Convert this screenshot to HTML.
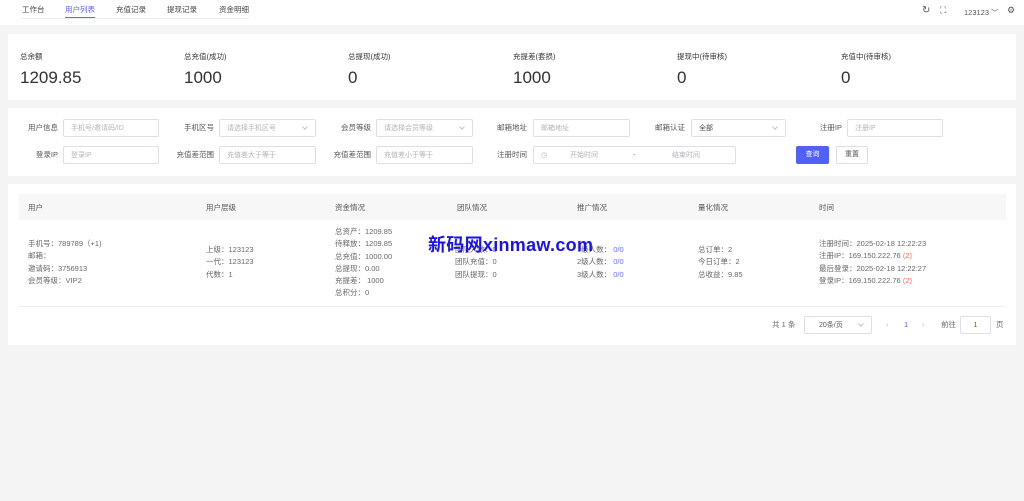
<!DOCTYPE html>
<html><head><meta charset="utf-8"><style>
*{margin:0;padding:0;box-sizing:border-box}
body{width:1024px;height:501px;background:#f4f4f5;font-family:"Liberation Sans","Noto Sans CJK SC",sans-serif;color:#606266;position:relative;overflow:hidden;font-size:8px}
.a{position:absolute;white-space:nowrap}
.hdr{position:absolute;left:0;top:0;width:1024px;height:25px;background:#fff}
.card{position:absolute;left:8px;width:1008px;background:#fff}
.lbl{font-size:7.5px;color:#333}
.num{font-size:17px;color:#303133}
.in{position:absolute;height:18px;border:1px solid #dcdfe6;border-radius:2px;background:#fff;color:#b0b3b8;font-size:7px;padding-left:7px;display:flex;align-items:center}
.fl{position:absolute;font-size:7.5px;color:#555;text-align:right;line-height:18px}
.chev{position:absolute;right:8px;top:5px;width:4px;height:4px;border-right:1px solid #c0c4cc;border-bottom:1px solid #c0c4cc;transform:rotate(45deg)}
.th{font-size:7.5px;color:#555;top:202px}
.td{font-size:7.5px;color:#666;line-height:12.3px}
.blue{color:#6a74f5}.red{color:#f56c6c}
</style></head><body>
<div class="hdr"></div>
<div class="a" style="left:22px;top:4px;font-size:7.5px;color:#444">工作台</div>
<div class="a" style="left:65px;top:4px;font-size:7.5px;color:#5c67f2">用户列表</div>
<div class="a" style="left:65px;top:17px;width:30px;height:1.5px;background:#5c67f2"></div>
<div class="a" style="left:116px;top:4px;font-size:7.5px;color:#444">充值记录</div>
<div class="a" style="left:167px;top:4px;font-size:7.5px;color:#444">提现记录</div>
<div class="a" style="left:219px;top:4px;font-size:7.5px;color:#444">资金明细</div>
<div class="a" style="left:21px;top:18px;width:228px;height:1px;background:#eee"></div>
<div class="a" style="left:922px;top:5px;font-size:10px;color:#555">↻</div>
<div class="a" style="left:940px;top:5px;font-size:9px;color:#555">⛶</div>
<div class="a" style="left:964px;top:7px;font-size:7.5px;color:#555">123123 ﹀</div>
<div class="a" style="left:1007px;top:5px;font-size:9px;color:#555">⚙</div>

<div class="card" style="top:34px;height:66px"></div>
<div class="a lbl" style="left:20px;top:51px">总余额</div><div class="a num" style="left:20px;top:68px">1209.85</div>
<div class="a lbl" style="left:184px;top:51px">总充值(成功)</div><div class="a num" style="left:184px;top:68px">1000</div>
<div class="a lbl" style="left:348px;top:51px">总提现(成功)</div><div class="a num" style="left:348px;top:68px">0</div>
<div class="a lbl" style="left:513px;top:51px">充提差(套损)</div><div class="a num" style="left:513px;top:68px">1000</div>
<div class="a lbl" style="left:677px;top:51px">提现中(待审核)</div><div class="a num" style="left:677px;top:68px">0</div>
<div class="a lbl" style="left:841px;top:51px">充值中(待审核)</div><div class="a num" style="left:841px;top:68px">0</div>

<div class="card" style="top:108px;height:68px"></div>
<div class="fl" style="left:0;width:58px;top:119px">用户信息</div><div class="in" style="left:63px;top:119px;width:96px">手机号/邀请码/ID</div>
<div class="fl" style="left:150px;width:64px;top:119px">手机区号</div><div class="in" style="left:219px;top:119px;width:97px">请选择手机区号<span class="chev"></span></div>
<div class="fl" style="left:310px;width:61px;top:119px">会员等级</div><div class="in" style="left:376px;top:119px;width:97px">请选择会员等级<span class="chev"></span></div>
<div class="fl" style="left:470px;width:57px;top:119px">邮箱地址</div><div class="in" style="left:533px;top:119px;width:97px">邮箱地址</div>
<div class="fl" style="left:630px;width:55px;top:119px">邮箱认证</div><div class="in" style="left:691px;top:119px;width:95px;color:#444">全部<span class="chev"></span></div>
<div class="fl" style="left:800px;width:42px;top:119px">注册IP</div><div class="in" style="left:847px;top:119px;width:96px">注册IP</div>
<div class="fl" style="left:0;width:58px;top:146px">登录IP</div><div class="in" style="left:63px;top:146px;width:96px">登录IP</div>
<div class="fl" style="left:150px;width:64px;top:146px">充值差范围</div><div class="in" style="left:219px;top:146px;width:97px">充值差大于等于</div>
<div class="fl" style="left:310px;width:61px;top:146px">充值差范围</div><div class="in" style="left:376px;top:146px;width:97px">充值差小于等于</div>
<div class="fl" style="left:470px;width:57px;top:146px">注册时间</div>
<div class="in" style="left:533px;top:146px;width:203px">◷<span style="position:absolute;left:36px">开始时间</span><span style="position:absolute;left:99px;color:#666">-</span><span style="position:absolute;left:138px">结束时间</span></div>
<div class="a" style="left:796px;top:146px;width:33px;height:18px;background:#5160f5;border-radius:2px;color:#fff;font-size:7px;text-align:center;line-height:18px">查询</div>
<div class="a" style="left:836px;top:146px;width:32px;height:18px;border:1px solid #dcdfe6;border-radius:2px;color:#555;font-size:7px;text-align:center;line-height:16px;background:#fff">重置</div>

<div class="card" style="top:184px;height:161px"></div>
<div class="a" style="left:19px;top:194px;width:987px;height:26px;background:#f7f7f8"></div>
<div class="a" style="left:19px;top:306px;width:987px;height:1px;background:#eceef2"></div>
<div class="a th" style="left:28px">用户</div>
<div class="a th" style="left:206px">用户层级</div>
<div class="a th" style="left:335px">资金情况</div>
<div class="a th" style="left:457px">团队情况</div>
<div class="a th" style="left:577px">推广情况</div>
<div class="a th" style="left:698px">量化情况</div>
<div class="a th" style="left:819px">时间</div>
<div class="a td" style="left:28px;top:238px">手机号：789789（+1)<br>邮箱：<br>邀请码：3756913<br>会员等级：VIP2</div>
<div class="a td" style="left:206px;top:244px">上级：123123<br>一代：123123<br>代数：1</div>
<div class="a td" style="left:335px;top:226px">总资产：1209.85<br>待释放：1209.85<br>总充值：1000.00<br>总提现：0.00<br>充提差： 1000<br>总积分：0</div>
<div class="a td" style="left:455px;top:244px">团队人数：0<br>团队充值：0<br>团队提现：0</div>
<div class="a td" style="left:577px;top:244px">1级人数： <span class="blue">0/0</span><br>2级人数： <span class="blue">0/0</span><br>3级人数： <span class="blue">0/0</span></div>
<div class="a td" style="left:698px;top:244px">总订单：2<br>今日订单：2<br>总收益：9.85</div>
<div class="a td" style="left:819px;top:238px">注册时间：2025-02-18 12:22:23<br>注册IP：169.150.222.76 <span class="red">(2)</span><br>最后登录：2025-02-18 12:22:27<br>登录IP：169.150.222.76 <span class="red">(2)</span></div>
<div class="a" style="left:428px;top:231px;font-size:18px;font-weight:bold;color:#1a12e8;letter-spacing:0.3px">新码网xinmaw.com</div>
<div class="a td" style="left:772px;top:319px">共 1 条</div>
<div class="in" style="left:804px;top:316px;width:68px;color:#555;padding-left:14px">20条/页<span class="chev"></span></div>
<div class="a td" style="left:886px;top:319px;color:#bbb">‹</div>
<div class="a td" style="left:904px;top:319px;color:#5160f5">1</div>
<div class="a td" style="left:922px;top:319px;color:#bbb">›</div>
<div class="a td" style="left:941px;top:319px">前往</div>
<div class="in" style="left:960px;top:316px;width:31px;color:#555;justify-content:center;padding:0">1</div>
<div class="a td" style="left:996px;top:319px">页</div>
</body></html>
